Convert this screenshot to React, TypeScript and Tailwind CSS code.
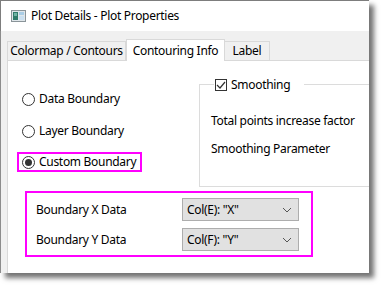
import React from 'react';

const font = { fontFamily: '"Noto Sans", "Open Sans", sans-serif' };

const WinIcon: React.FC = () => (
  <svg width="15" height="12" viewBox="0 0 15 12">
    <rect x="0.5" y="0.5" width="14" height="11" fill="#dfe6ea" stroke="#8a9499" />
    <rect x="2" y="2" width="5" height="8" fill="#2f7a6a" />
    <rect x="3" y="3" width="3" height="3" fill="#6fb2a4" />
    <rect x="8" y="2" width="5" height="3" fill="#a9cde6" />
    <rect x="8" y="6" width="5" height="4" fill="#c9dff0" />
  </svg>
);

const Radio: React.FC<{ label: string; checked?: boolean; boxed?: boolean }> = ({ label, checked, boxed }) => (
  <div
    className={
      'flex items-center h-[20px] w-[125px] pl-[3px] border-2 ' +
      (boxed ? 'border-[#ff00ff]' : 'border-transparent')
    }
  >
    <span className="w-[13px] h-[13px] shrink-0 rounded-full border border-[#333333] bg-white flex items-center justify-center">
      {checked && <span className="w-[7px] h-[7px] rounded-full bg-[#333333]" />}
    </span>
    <span className="ml-[4px] text-[12px] leading-[16px] text-black whitespace-nowrap">{label}</span>
  </div>
);

const Chevron: React.FC = () => (
  <svg width="10" height="6" viewBox="0 0 10 6">
    <path d="M1 1 L5 5 L9 1" fill="none" stroke="#555555" strokeWidth="1" />
  </svg>
);

const Dropdown: React.FC<{ value: string }> = ({ value }) => (
  <div className="w-[117px] h-[23px] bg-[#e1e1e1] border border-[#adadad] flex items-center justify-between pl-[4px] pr-[6px]">
    <span className="text-[12px] leading-[16px] text-black whitespace-nowrap">{value}</span>
    <Chevron />
  </div>
);

const App: React.FC = () => {
  return (
    <div className="w-[384px] h-[289px] bg-white tracking-[-0.3px]" style={font}>
      <div className="w-[369px] h-[273px] flex flex-col overflow-hidden shadow-[5px_5px_5px_rgba(0,0,0,0.55)]">
        {/* title bar */}
        <div className="h-[31px] bg-white border-t border-l border-[#7d7d7d] flex items-center pl-[10px]">
          <WinIcon />
          <span className="ml-[5px] text-[12px] leading-[16px] text-black whitespace-nowrap">Plot Details - Plot Properties</span>
        </div>

        {/* body */}
        <div className="flex-1 bg-[#f0f0f0] border-l border-[#8c8c8c] pl-[6px] flex flex-col">
          {/* tabs */}
          <div className="h-[29px] flex items-end">
            <div className="h-[19px] w-[119px] border border-b-0 border-[#d9d9d9] bg-[#f0f0f0] flex items-center justify-center text-[12px] leading-[16px] text-black whitespace-nowrap">
              Colormap / Contours
            </div>
            <div className="h-[22px] w-[99px] border border-b-0 border-[#d9d9d9] bg-white flex items-center justify-center text-[12px] leading-[16px] text-black whitespace-nowrap -mb-px relative z-10">
              Contouring Info
            </div>
            <div className="h-[19px] w-[45px] border border-b-0 border-l-0 border-[#d9d9d9] bg-[#f0f0f0] flex items-center justify-center text-[12px] leading-[16px] text-black">
              Label
            </div>
          </div>

          {/* panel */}
          <div className="flex-1 bg-white border-l border-t border-[#d9d9d9] flex flex-col">
            <div className="flex items-start">
              <div className="w-[191px] shrink-0 pl-[9px] pt-[28px] flex flex-col">
                <Radio label="Data Boundary" />
                <div className="mt-[12px]">
                  <Radio label="Layer Boundary" />
                </div>
                <div className="mt-[11px]">
                  <Radio label="Custom Boundary" checked boxed />
                </div>
              </div>

              <fieldset className="mt-[17px] w-[200px] border border-[#dcdcdc] pl-[11px] pb-[29px] shrink-0">
                <legend className="ml-[3px] px-[1px] pr-[14px] h-[13px] flex items-center">
                  <span className="w-[12px] h-[12px] border border-[#333333] bg-white flex items-center justify-center">
                    <svg width="10" height="8" viewBox="0 0 10 8">
                      <path d="M1 4 L4 7 L9 1" fill="none" stroke="#333333" strokeWidth="1.2" />
                    </svg>
                  </span>
                  <span className="ml-[4px] text-[12px] leading-[16px] text-black">Smoothing</span>
                </legend>
                <div className="pt-[22px] text-[12px] leading-[16px] text-black whitespace-nowrap">Total points increase factor</div>
                <div className="mt-[12px] text-[12px] leading-[16px] text-black whitespace-nowrap">Smoothing Parameter</div>
              </fieldset>
            </div>

            <div className="mt-[4px] ml-[17px] w-[288px] h-[66px] border-2 border-[#ff00ff] pt-[5px] pl-[9px] flex flex-col gap-[7px]">
              <div className="flex items-center h-[23px]">
                <span className="w-[146px] text-[12px] leading-[16px] text-black">Boundary X Data</span>
                <Dropdown value={'Col(E): "X"'} />
              </div>
              <div className="flex items-center h-[23px]">
                <span className="w-[146px] text-[12px] leading-[16px] text-black">Boundary Y Data</span>
                <Dropdown value={'Col(F): "Y"'} />
              </div>
            </div>
          </div>
        </div>
      </div>
    </div>
  );
};

export default App;
